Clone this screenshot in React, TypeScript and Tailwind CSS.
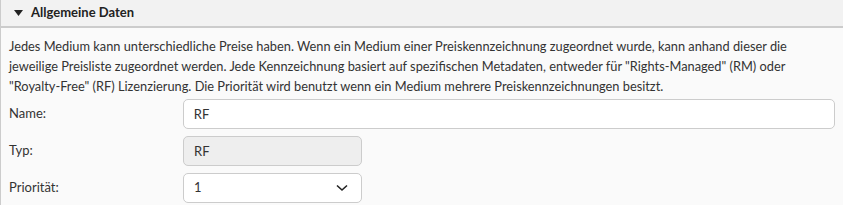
import React from "react";

const App = () => {
  return (
    <div className="w-[843px] h-[205px] bg-[#fafafa] border-l border-[#cccccc] text-[#333333] text-[13px] font-['Lato',sans-serif] overflow-hidden">
      {/* Header */}
      <div className="h-[28px] bg-[#f2f2f2] border-b-2 border-[#cccccc] flex items-center pl-[13px] gap-[8px]">
        <svg width="9" height="6" viewBox="0 0 9 6">
          <path d="M0 0 L9 0 L4.5 6 Z" fill="#222" />
        </svg>
        <span className="font-bold text-[#222]">Allgemeine Daten</span>
      </div>

      <div className="px-[8px] pt-[8px]">
        <p className="leading-[20px] text-[12.8px]">
          Jedes Medium kann unterschiedliche Preise haben. Wenn ein Medium einer Preiskennzeichnung zugeordnet wurde, kann anhand dieser die
          jeweilige Preisliste zugeordnet werden. Jede Kennzeichnung basiert auf spezifischen Metadaten, entweder für "Rights-Managed" (RM) oder
          "Royalty-Free" (RF) Lizenzierung. Die Priorität wird benutzt wenn ein Medium mehrere Preiskennzeichnungen besitzt.
        </p>

        <div className="flex flex-col gap-[7px] mt-[3px]">
          <div className="flex items-center">
            <label className="w-[174px]">Name:</label>
            <input
              defaultValue="RF"
              className="w-[653px] h-[30px] bg-white border border-[#cccccc] rounded-[5px] px-[10px] outline-none"
            />
          </div>
          <div className="flex items-center">
            <label className="w-[174px]">Typ:</label>
            <input
              defaultValue="RF"
              disabled
              className="w-[179px] h-[30px] bg-[#eeeeee] border border-[#cccccc] rounded-[5px] px-[10px] text-[#333333]"
            />
          </div>
          <div className="flex items-center">
            <label className="w-[174px]">Priorität:</label>
            <div className="w-[179px] h-[30px] bg-white border border-[#cccccc] rounded-[5px] px-[10px] flex items-center justify-between">
              <span>1</span>
              <svg width="12" height="8" viewBox="0 0 12 8" className="mr-[3px]">
                <path d="M1 1.5 L6 6 L11 1.5" fill="none" stroke="#222" strokeWidth="1.6" />
              </svg>
            </div>
          </div>
        </div>
      </div>
    </div>
  );
};

export default App;
